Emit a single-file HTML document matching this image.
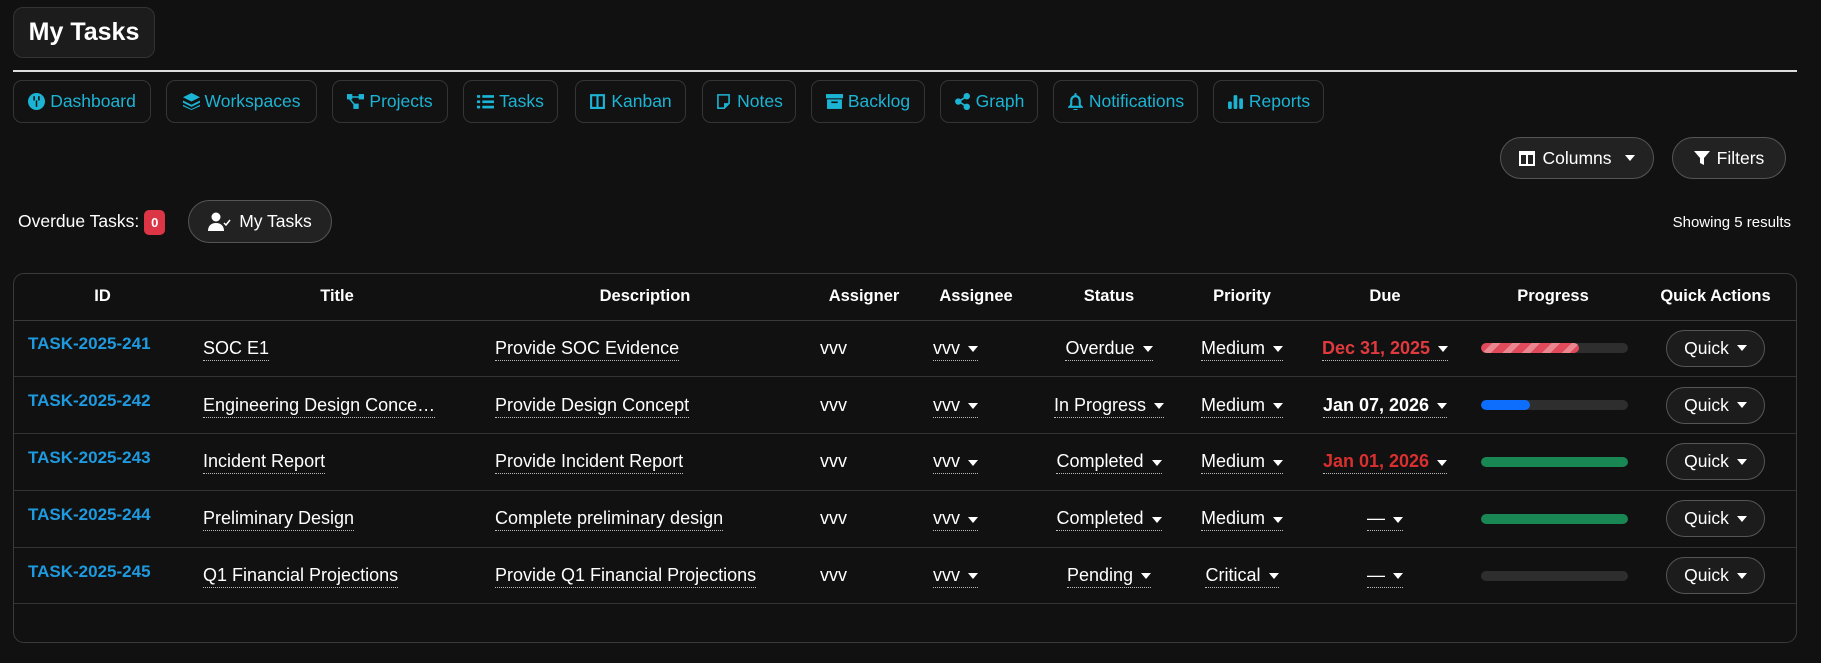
<!DOCTYPE html>
<html><head><meta charset="utf-8"><style>
*{box-sizing:border-box;margin:0;padding:0}
body{width:1821px;height:663px;background:#111;color:#fff;font-family:"Liberation Sans",sans-serif;position:relative;overflow:hidden}
.abs{position:absolute}
.title{left:13px;top:7px;width:142px;height:51px;background:#1c1c1c;border:1px solid #333;border-radius:10px;font-size:25px;font-weight:bold;display:flex;align-items:center;justify-content:center}
.hr{left:13px;top:70px;width:1784px;height:2px;background:#ddd}
.nav{top:80px;height:43px;border:1px solid #353535;border-radius:9px;background:#121212;color:#1cb4d4;font-size:17.5px;display:flex;align-items:center;justify-content:center;gap:5px}
.nav svg{width:17px;height:17px;fill:#1cb4d4}
.pill{border:1px solid #555;background:#222;border-radius:22px;color:#fff;font-size:17.5px;display:flex;align-items:center;justify-content:center;gap:7px}
.caret{display:inline-block;width:0;height:0;border-left:5px solid transparent;border-right:5px solid transparent;border-top:6px solid #fff;margin-left:8px;vertical-align:middle}
.tbl{left:13px;top:273px;width:1784px;height:370px;border:1px solid #3a3a3a;border-radius:11px;overflow:hidden}
table{border-collapse:collapse;table-layout:fixed;width:1784px;font-size:18px}
th{height:46px;font-weight:bold;text-align:center;border-bottom:1px solid #3a3a3a;font-size:16.5px}
td{height:56.8px;border-bottom:1px solid #333;white-space:nowrap;overflow:hidden}
td.id{color:#1e9ae0;font-weight:bold;padding-left:14px;vertical-align:middle;padding-bottom:8px;font-size:17px}
.u{border-bottom:1px dotted #bbb;padding-bottom:2px}
td.l{padding-left:12px}
td.c{text-align:center}
.bar{height:10px;border-radius:5px;background:#2e2e2e;margin:0 5px 0 8px;overflow:hidden}
.bar i{display:block;height:100%;border-radius:5px}
.q{display:inline-flex;width:99px;height:37px;border:1px solid #555;border-radius:19px;background:#1c1c1c;align-items:center;justify-content:center;font-size:17.5px}
.red{color:#e03a3e}
</style></head><body>
<div class="abs title">My Tasks</div>
<div class="abs hr"></div>

<div class="abs nav" style="left:13px;width:138px"><svg viewBox="0 0 16 16"><circle cx="8" cy="8" r="8"/><rect x="5" y="3" width="1.5" height="4" fill="#111"/><rect x="9.5" y="3" width="1.5" height="4" fill="#111"/><rect x="7.3" y="7" width="1.4" height="6" fill="#111"/></svg>Dashboard</div>
<div class="abs nav" style="left:166px;width:151px"><svg viewBox="0 0 16 16"><path d="M8 0l8 4-8 4-8-4z"/><path d="M0 7l8 4 8-4v2l-8 4-8-4z"/><path d="M0 11l8 4 8-4v1.5l-8 3.5-8-3.5z"/></svg>Workspaces</div>
<div class="abs nav" style="left:332px;width:116px"><svg viewBox="0 0 16 16"><rect x="0" y="1" width="5" height="5"/><rect x="11" y="1" width="5" height="5"/><rect x="6" y="10" width="5" height="5"/><path d="M4 3h8v1.5H4zM3 5l5 6-1 1-5-6z"/></svg>Projects</div>
<div class="abs nav" style="left:463px;width:95px"><svg viewBox="0 0 16 16"><rect x="0" y="2" width="3" height="2.5"/><rect x="5" y="2" width="11" height="2.5"/><rect x="0" y="7" width="3" height="2.5"/><rect x="5" y="7" width="11" height="2.5"/><rect x="0" y="12" width="3" height="2.5"/><rect x="5" y="12" width="11" height="2.5"/></svg>Tasks</div>
<div class="abs nav" style="left:575px;width:111px"><svg viewBox="0 0 16 16"><path d="M1 1h14v14H1zM3 3v10h4V3zm6 0v10h4V3z" fill-rule="evenodd"/></svg>Kanban</div>
<div class="abs nav" style="left:702px;width:94px"><svg viewBox="0 0 16 16"><path d="M2 1h12v9l-5 5H2zM3.5 2.5v11h5v-4h4v-7z" fill-rule="evenodd"/></svg>Notes</div>
<div class="abs nav" style="left:811px;width:114px"><svg viewBox="0 0 16 16"><rect x="0" y="1" width="16" height="4"/><path d="M1 6h14v9H1z"/><rect x="5" y="8" width="6" height="1.5" fill="#111"/></svg>Backlog</div>
<div class="abs nav" style="left:940px;width:98px"><svg viewBox="0 0 16 16"><circle cx="12" cy="3" r="3"/><circle cx="4" cy="8" r="3"/><circle cx="12" cy="13" r="3"/><path d="M4 7.3l8-5 .8 1.3-8 5zM4.8 7.4l8 5-.8 1.3-8-5z"/></svg>Graph</div>
<div class="abs nav" style="left:1053px;width:145px"><svg viewBox="0 0 16 16"><path d="M8 0a1 1 0 011 1v1a5 5 0 014 5v4l2 2v1H1v-1l2-2V7a5 5 0 014-5V1a1 1 0 011-1zM4.5 12h7l-.5-1V7a3 3 0 00-6 0v4zM6 15h4a2 2 0 01-4 0z" fill-rule="evenodd"/></svg>Notifications</div>
<div class="abs nav" style="left:1213px;width:111px"><svg viewBox="0 0 16 16"><rect x="1" y="8" width="3.5" height="7" rx="1"/><rect x="6.2" y="2" width="3.5" height="13" rx="1"/><rect x="11.5" y="5" width="3.5" height="10" rx="1"/></svg>Reports</div>

<div class="abs pill" style="left:1500px;top:137px;width:154px;height:42px"><svg width="16" height="15" viewBox="0 0 16 15"><path d="M0 0h16v15H0zM2 4v9h5V4zm7 0v9h5V4z" fill="#fff" fill-rule="evenodd"/></svg>Columns<span class="caret" style="margin-left:6px"></span></div>
<div class="abs pill" style="left:1672px;top:137px;width:114px;height:42px"><svg width="16" height="16" viewBox="0 0 16 16"><path d="M0 1h16l-6 7v7l-4-2V8z" fill="#fff"/></svg>Filters</div>

<div class="abs" style="left:18px;top:210px;font-size:17.5px">Overdue Tasks: <span style="display:inline-block;background:#dc3545;color:#fff;font-size:13px;font-weight:bold;padding:5px 7px;border-radius:5px;vertical-align:middle">0</span></div>
<div class="abs pill" style="left:188px;top:200px;width:144px;height:43px"><svg width="24" height="20" viewBox="0 0 24 20"><circle cx="8" cy="5" r="4.5" fill="#fff"/><path d="M0 19c0-5 3-8 8-8s8 3 8 8z" fill="#fff"/><path d="M16 11l2 2 4-5" stroke="#fff" stroke-width="1.5" fill="none"/></svg>My Tasks</div>
<div class="abs" style="right:30px;top:214px;font-size:15px">Showing 5 results</div>

<div class="abs tbl"><table>
<colgroup><col style="width:177px"><col style="width:292px"><col style="width:324px"><col style="width:114px"><col style="width:110px"><col style="width:156px"><col style="width:110px"><col style="width:176px"><col style="width:160px"><col style="width:165px"></colgroup>
<tr><th>ID</th><th>Title</th><th>Description</th><th>Assigner</th><th>Assignee</th><th>Status</th><th>Priority</th><th>Due</th><th>Progress</th><th>Quick Actions</th></tr>
<tr><td class="id">TASK-2025-241</td><td class="l"><span class="u">SOC E1</span></td><td class="l"><span class="u">Provide SOC Evidence</span></td><td class="l" style="padding-left:13px">vvv</td><td class="l"><span class="u">vvv<span class="caret"></span></span></td><td class="c"><span class="u">Overdue<span class="caret"></span></span></td><td class="c"><span class="u">Medium<span class="caret"></span></span></td><td class="c"><span class="u red" style="font-weight:bold">Dec 31, 2025<span class="caret"></span></span></td><td><div class="bar"><i style="width:67%;background:repeating-linear-gradient(135deg,#e04a5a 0 8px,#e9868f 8px 14px)"></i></div></td><td class="c"><span class="q">Quick<span class="caret"></span></span></td></tr>
<tr><td class="id">TASK-2025-242</td><td class="l"><span class="u">Engineering Design Conce…</span></td><td class="l"><span class="u">Provide Design Concept</span></td><td class="l" style="padding-left:13px">vvv</td><td class="l"><span class="u">vvv<span class="caret"></span></span></td><td class="c"><span class="u">In Progress<span class="caret"></span></span></td><td class="c"><span class="u">Medium<span class="caret"></span></span></td><td class="c"><span class="u" style="font-weight:bold">Jan 07, 2026<span class="caret"></span></span></td><td><div class="bar"><i style="width:33%;background:#0d6efd"></i></div></td><td class="c"><span class="q">Quick<span class="caret"></span></span></td></tr>
<tr><td class="id">TASK-2025-243</td><td class="l"><span class="u">Incident Report</span></td><td class="l"><span class="u">Provide Incident Report</span></td><td class="l" style="padding-left:13px">vvv</td><td class="l"><span class="u">vvv<span class="caret"></span></span></td><td class="c"><span class="u">Completed<span class="caret"></span></span></td><td class="c"><span class="u">Medium<span class="caret"></span></span></td><td class="c"><span class="u red" style="font-weight:bold;color:#d9302f">Jan 01, 2026<span class="caret"></span></span></td><td><div class="bar"><i style="width:100%;background:#198754"></i></div></td><td class="c"><span class="q">Quick<span class="caret"></span></span></td></tr>
<tr><td class="id">TASK-2025-244</td><td class="l"><span class="u">Preliminary Design</span></td><td class="l"><span class="u">Complete preliminary design</span></td><td class="l" style="padding-left:13px">vvv</td><td class="l"><span class="u">vvv<span class="caret"></span></span></td><td class="c"><span class="u">Completed<span class="caret"></span></span></td><td class="c"><span class="u">Medium<span class="caret"></span></span></td><td class="c"><span class="u">—<span class="caret"></span></span></td><td><div class="bar"><i style="width:100%;background:#198754"></i></div></td><td class="c"><span class="q">Quick<span class="caret"></span></span></td></tr>
<tr><td class="id">TASK-2025-245</td><td class="l"><span class="u">Q1 Financial Projections</span></td><td class="l"><span class="u">Provide Q1 Financial Projections</span></td><td class="l" style="padding-left:13px">vvv</td><td class="l"><span class="u">vvv<span class="caret"></span></span></td><td class="c"><span class="u">Pending<span class="caret"></span></span></td><td class="c"><span class="u">Critical<span class="caret"></span></span></td><td class="c"><span class="u">—<span class="caret"></span></span></td><td><div class="bar"></div></td><td class="c"><span class="q">Quick<span class="caret"></span></span></td></tr>
</table></div>
</body></html>
